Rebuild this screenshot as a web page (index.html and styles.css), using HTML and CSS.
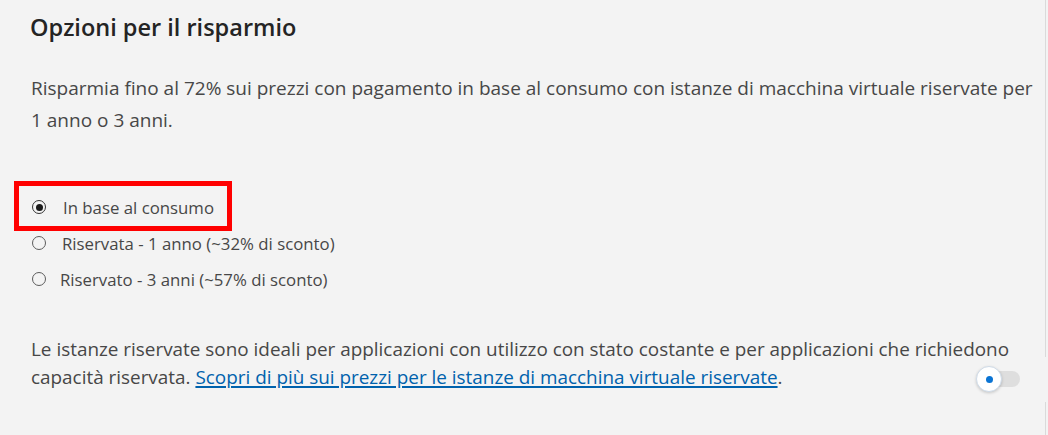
FILE: index.html
```html
<!DOCTYPE html>
<html lang="it">
<head>
<meta charset="utf-8">
<title>Opzioni per il risparmio</title>
<link rel="stylesheet" href="styles.css">
</head>
<body>
<div class="page">
  <main class="content">
    <h2 class="title">Opzioni per il risparmio</h2>
    <p class="intro">Risparmia fino al 72% sui prezzi con pagamento in base al consumo con istanze di macchina virtuale riservate per 1 anno o 3 anni.</p>
    <ul class="options">
      <li class="option option-highlight">
        <span class="radio radio-checked"></span>
        <span class="label label-1">In base al consumo</span>
      </li>
      <li class="option">
        <span class="radio"></span>
        <span class="label label-2">Riservata - 1 anno (~32% di sconto)</span>
      </li>
      <li class="option">
        <span class="radio"></span>
        <span class="label label-3">Riservato - 3 anni (~57% di sconto)</span>
      </li>
    </ul>
    <div class="note-row">
      <p class="note">Le istanze riservate sono ideali per applicazioni con utilizzo con stato costante e per applicazioni che richiedono capacità riservata. <a class="link" href="#">Scopri di più sui prezzi per le istanze di macchina virtuale riservate</a>.</p>
      <span class="toggle"><span class="knob"><span class="dot"></span></span></span>
    </div>
  </main>
  <div class="rail"></div>
</div>
</body>
</html>
```

FILE: styles.css
```css
html, body {
  margin: 0;
  padding: 0;
}

body {
  background: #f3f3f3;
  font-family: "Open Sans", "Noto Sans", sans-serif;
  color: #474747;
  width: 1048px;
  height: 435px;
  overflow: hidden;
}

.page {
  display: flex;
  height: 435px;
}

.content {
  width: 1045px;
  padding: 12px 0 0 30px;
  box-sizing: border-box;
}

.rail {
  width: 1px;
  height: 435px;
  background: linear-gradient(#dadada 0, #dadada 357px, transparent 357px, transparent 402px, #dadada 402px);
}

.title {
  margin: 0;
  font-size: 23.5px;
  line-height: 30px;
  font-weight: 600;
  color: #242424;
}

.intro {
  margin: 30px 0 0 1px;
  width: 1004px;
  font-size: 19px;
  line-height: 32px;
}

.options {
  list-style: none;
  margin: 53px 0 0 0;
  padding: 0;
}

.option {
  position: relative;
  display: flex;
  align-items: center;
  height: 36px;
  font-size: 16.8px;
}

.option-highlight::after {
  content: "";
  position: absolute;
  left: -16px;
  top: -8px;
  width: 208px;
  height: 40px;
  border: 5px solid #ff0000;
}

.radio {
  width: 14px;
  height: 14px;
  box-sizing: border-box;
  border: 1px solid #5c5c5c;
  border-radius: 50%;
  margin-left: 2px;
  display: flex;
  align-items: center;
  justify-content: center;
  flex: none;
}

.radio-checked {
  border-color: #333333;
}

.radio-checked::before {
  content: "";
  width: 7px;
  height: 7px;
  border-radius: 50%;
  background: #1a1a1a;
}

.label-1 { margin-left: 17px; }
.label-2 { margin-left: 16px; }
.label-3 { margin-left: 14px; }

.note-row {
  position: relative;
  margin-top: 38px;
}

.note {
  margin: 0 0 0 1px;
  width: 1000px;
  font-size: 18.9px;
  line-height: 28px;
}

.link {
  color: #0062ad;
  text-decoration: underline;
  text-decoration-thickness: 2px;
  text-underline-offset: 2px;
}

.toggle {
  position: absolute;
  left: 948px;
  top: 36px;
  width: 42px;
  height: 16px;
  border-radius: 8px;
  background: #dedede;
}

.knob {
  position: absolute;
  left: -2px;
  top: -5px;
  width: 26px;
  height: 26px;
  box-sizing: border-box;
  border-radius: 50%;
  background: #ffffff;
  border: 1px solid #cfdbe8;
  box-shadow: 0 1px 3px rgba(0, 0, 0, 0.18);
  display: flex;
  align-items: center;
  justify-content: center;
}

.dot {
  width: 7px;
  height: 7px;
  border-radius: 50%;
  background: #0a74d4;
}
```
